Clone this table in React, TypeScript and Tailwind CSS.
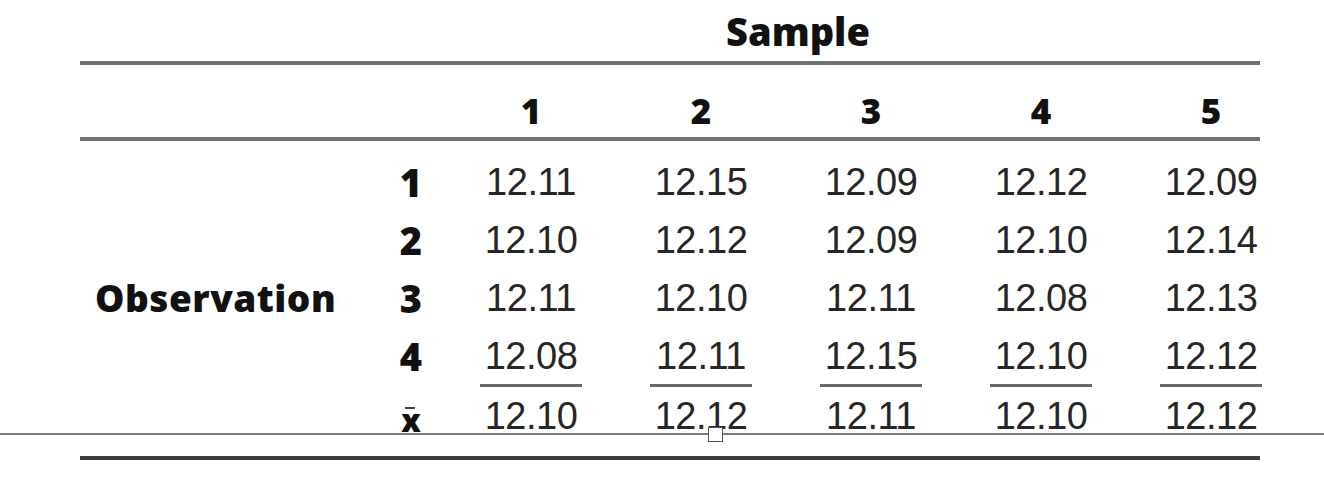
const samples = [
  ["12.11", "12.15", "12.09", "12.12", "12.09"],
  ["12.10", "12.12", "12.09", "12.10", "12.14"],
  ["12.11", "12.10", "12.11", "12.08", "12.13"],
  ["12.08", "12.11", "12.15", "12.10", "12.12"],
];

const means = ["12.10", "12.12", "12.11", "12.10", "12.12"];

// same column widths for every row of the table
const cols = "grid grid-cols-[306px_50px_144px_170px_170px_170px_170px]";

const heading = "font-['Open_Sans',sans-serif] font-extrabold text-[#111]";
const value =
  "w-[98px] text-center font-['Liberation_Sans',Arial,sans-serif] text-[38px] leading-none tracking-[-0.5px] text-[#262626]";

const App = () => {
  return (
    <div className="relative w-[1324px] h-[482px] bg-white overflow-hidden">
      <div className="ml-[80px] w-[1180px]">
        {/* TITLE */}
        <div className="h-[61px] flex items-center justify-center pl-[256px]">
          <span className={`${heading} text-[38px] leading-none`}>Sample</span>
        </div>
        <div className="h-[4px] bg-[#707070]" />

        {/* SAMPLE NUMBERS */}
        <div className={`${cols} h-[72px] pt-[18px] items-center`}>
          <div />
          <div />
          {[1, 2, 3, 4, 5].map((n) => (
            <div key={n} className="flex justify-end">
              <span className={`${heading} w-[98px] text-center text-[35px] leading-none`}>
                {n}
              </span>
            </div>
          ))}
        </div>
        <div className="h-[4px] bg-[#707070]" />

        {/* OBSERVATIONS */}
        <div className="pt-[12px]">
          {samples.map((row, i) => (
            <div
              key={i}
              className={`${cols} items-center ${i === 3 ? "h-[57px]" : "h-[58px]"}`}
            >
              <div className="pl-[15px]">
                {i === 2 && (
                  <span className={`${heading} text-[37px] leading-none tracking-[0.5px]`}>
                    Observation
                  </span>
                )}
              </div>
              <div className={`${heading} text-center text-[38px] leading-none`}>
                {i + 1}
              </div>
              {row.map((v, j) => (
                <div key={j} className="flex justify-end">
                  <span className={value}>{v}</span>
                </div>
              ))}
            </div>
          ))}

          {/* MEAN ROW */}
          <div className={cols}>
            <div />
            <div className="h-[61px] pt-[3px] flex items-center justify-center">
              <span className="flex flex-col items-center pt-[10px]">
                <span className="w-[10px] h-[2px] bg-[#444] -ml-[2px]" />
                <span className={`${heading} text-[31px] leading-none -mt-[4px]`}>x</span>
              </span>
            </div>
            {means.map((v, j) => (
              <div key={j} className="flex justify-end">
                <div className="w-[102px] h-[61px] border-t-[3px] border-[#686868] flex items-center justify-center -mr-[2px]">
                  <span className={value}>{v}</span>
                </div>
              </div>
            ))}
          </div>
        </div>

        <div className="mt-[11px] h-[4px] bg-[#3c3c3c]" />
      </div>

      {/* editor guide line with its handle, over the image */}
      <div className="absolute left-0 top-[433px] w-full h-[2px] bg-[#7a7a7a]" />
      <div className="absolute left-[708px] top-[427px] w-[15px] h-[15px] bg-white border border-[#555]" />
    </div>
  );
};

export default App;
